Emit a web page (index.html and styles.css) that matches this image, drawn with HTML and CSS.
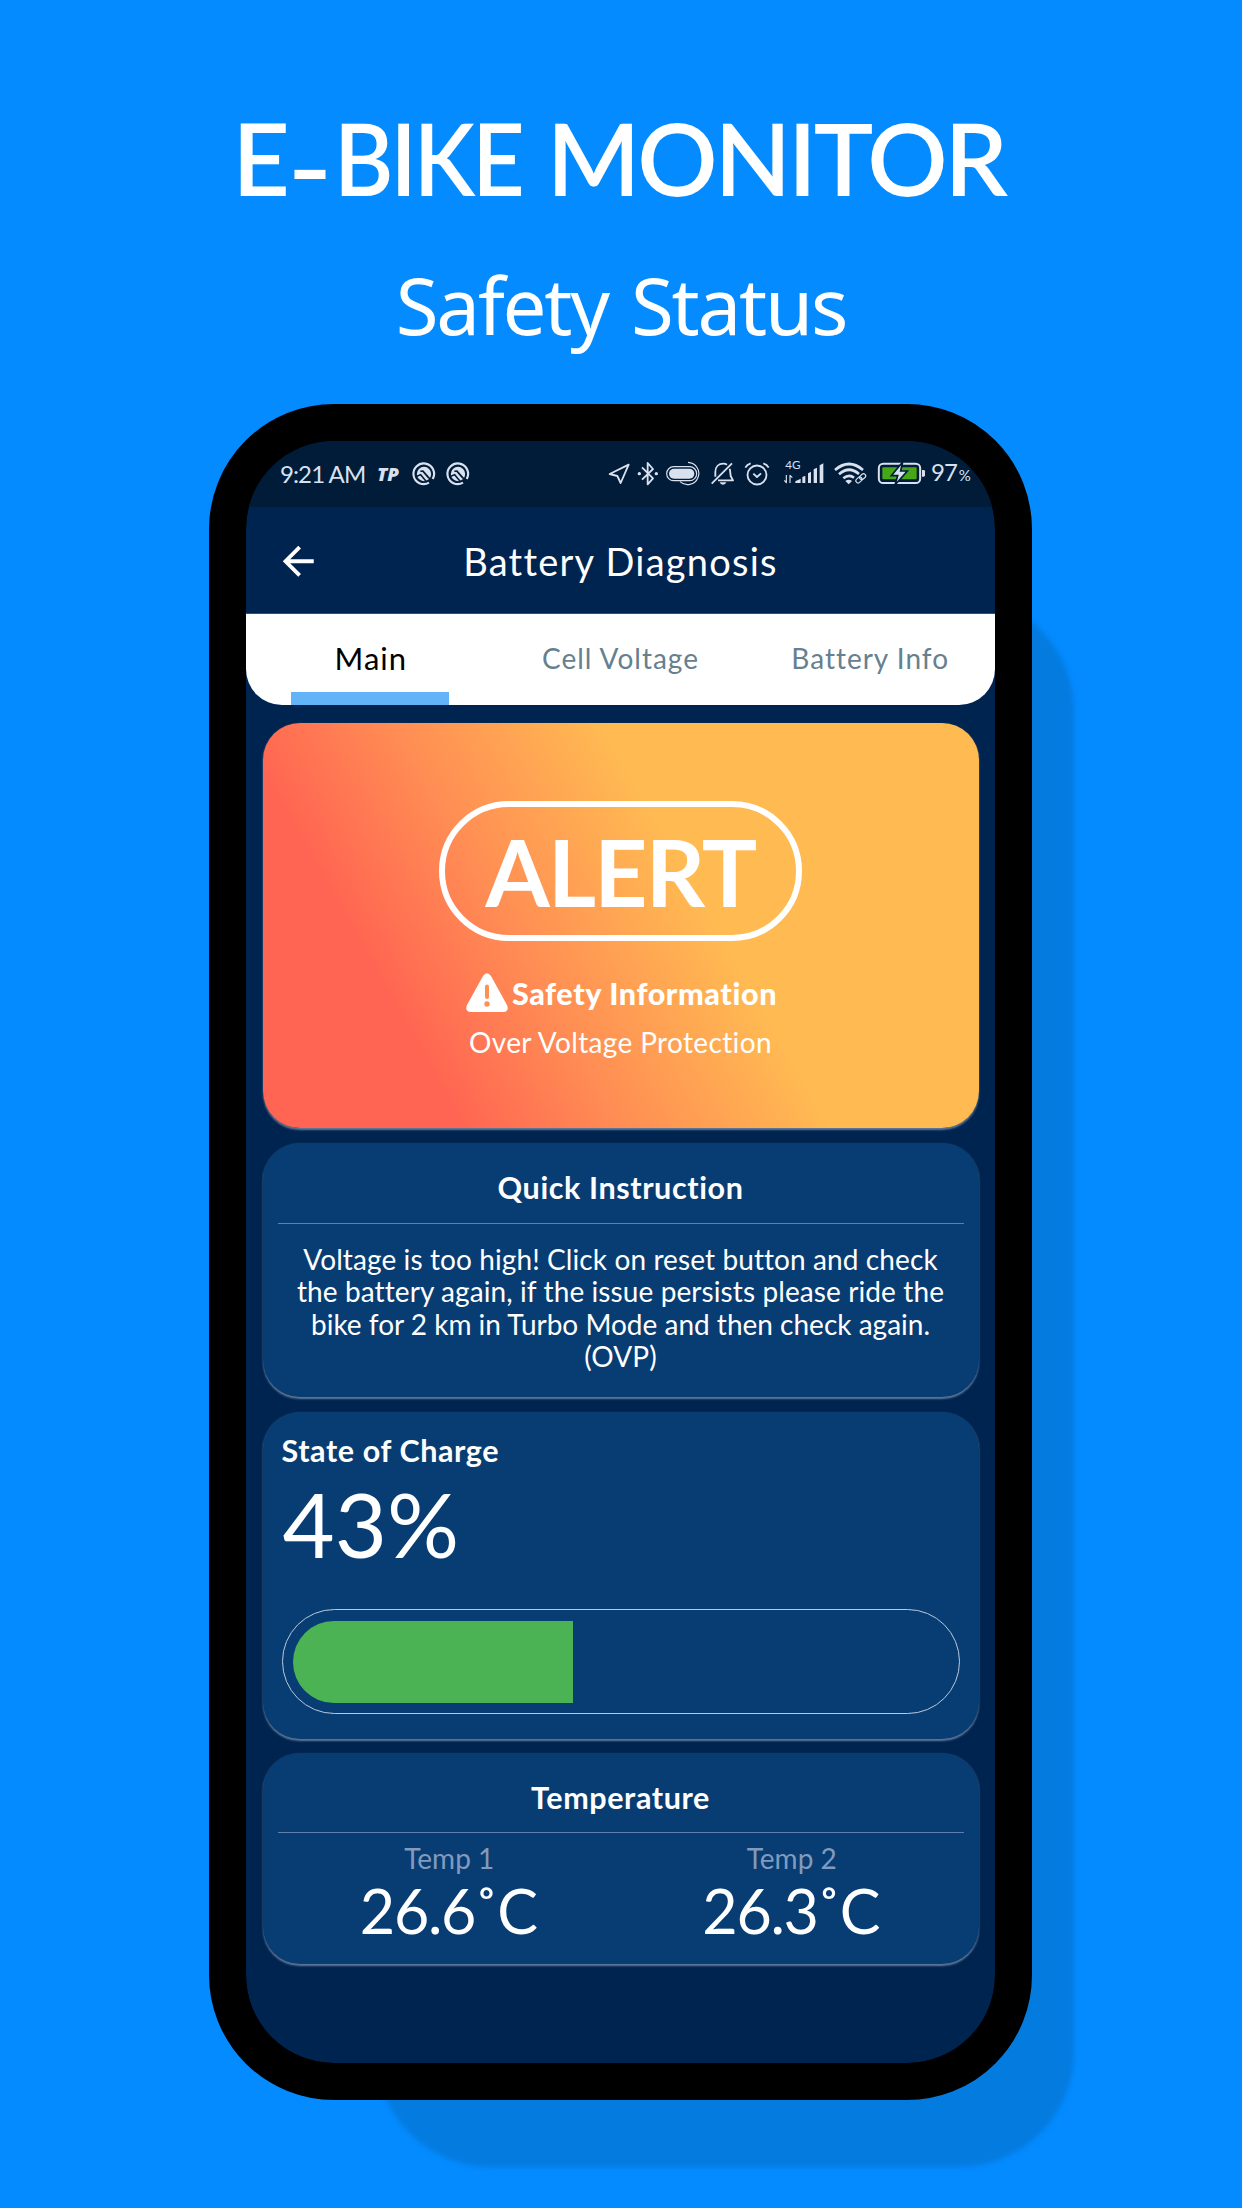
FILE: index.html
```
<!DOCTYPE html>
<html lang="en">
<head>
<meta charset="utf-8">
<title>E-Bike Monitor</title>
<link rel="stylesheet" href="styles.css">
</head>
<body>
<main class="page">
  <h1 class="title">E<span class="dash">-</span><span class="bike">BIKE</span> MONITOR</h1>
  <p class="subtitle">Safety Status</p>

  <div class="phone">
    <div class="screen">
      <div class="status">
        <span class="time">9:21 AM</span>
        <svg class="tp" width="30" height="27" viewBox="0 0 30 27"><text x="3" y="20.500" textLength="22" lengthAdjust="spacingAndGlyphs">TP</text></svg>
        <svg class="app" width="24" height="24" viewBox="0 0 72 72"><g id="speed"><path d="M62 51A31 31 0 1 0 51 62" fill="none" stroke="currentColor" stroke-width="6.500"/><circle cx="36" cy="36" r="21.500" fill="currentColor"/><path d="M10 45L26 38L44 60M25 28L33 27L64 62M32 27L50 48" fill="none" stroke="#001c39" stroke-width="4.500"/></g></svg>
        <svg class="app" width="24" height="24" viewBox="0 0 72 72"><use href="#speed"/></svg>

        <div class="indicators">
          <svg width="26" height="27" viewBox="52 46 78 81"><path d="M114 60L57 88L80 94L90 115Z" class="line"/></svg>
          <svg width="28" height="27" viewBox="130 46 84 81"><path d="M154 105L187 73L171 55V119L187 101L154 68" class="line"/><circle cx="146" cy="87" r="5"/><circle cx="197" cy="87" r="5"/></svg>
          <svg width="44" height="27" viewBox="214 46 132 81"><rect x="228" y="66" width="90" height="42" rx="21" class="line thin"/><rect x="235" y="72" width="76" height="30" rx="15"/><path d="M292 53A33.5 33.5 0 1 1 268 111" class="line thin"/></svg>
          <svg width="33" height="27" viewBox="346 46 99 81"><path d="M363 117L424 56M374 96V82C374 66 384 57 398 57C403 57 406 58 409 60M417 72C419 78 419 87 420 94L427 107H382" class="line"/><path d="M387 113H407Q405 120 397 120T387 113Z"/></svg>
          <svg width="37" height="27" viewBox="445 46 111 81"><circle cx="499" cy="91" r="28.5" class="line"/><path d="M488 87L499 97L511 86M464 69Q469 59 480 56M518 56Q529 59 534 69" class="line"/></svg>
          <svg width="53" height="27" viewBox="556 46 159 81"><text x="584" y="74" class="net">4G</text><path d="M587 91V114L581 107M598 115V92L605 99" class="line thin"/><path d="M614 115V110L630 102V115ZM635 115V97L644 93V115ZM652 115V86L661 81V115ZM669 115V74L679 69V115ZM687 115V62L698 56V115Z"/></svg>
          <svg width="43" height="27" viewBox="715 46 129 81"><path d="M733 76Q775 40 817 76M745 89Q775 62 805 88M758 101Q775 87 790 99" class="line wave"/><path d="M764 109Q774 101 784 109L774 119Z"/><g transform="rotate(-42 811 101)" class="line thin"><rect x="793" y="94" width="20" height="13" rx="6.5"/><rect x="808" y="94" width="20" height="13" rx="6.5"/></g></svg>
          <svg width="56" height="27" viewBox="844 46 168 81"><rect x="864.500" y="57" width="124" height="58" rx="13" class="line cell"/><rect x="875" y="68" width="103" height="36" rx="3" class="level"/><path d="M994 76H999Q1003 76 1003 80V92Q1003 96 999 96H994Z"/><path d="M936 52L902 93H921L913 121L950 79H930Z" class="bolt"/></svg>
          <span class="percent">97<small>%</small></span>
        </div>
      </div>

      <header class="appbar">
        <svg class="back" width="46.500" height="46.500" viewBox="0 0 24 24"><path d="M20 11H7.830L13.420 5.410L12 4L4 12L12 20L13.410 18.590L7.830 13H20Z"/></svg>
        <h2>Battery Diagnosis</h2>
      </header>

      <nav class="tabs">
        <a class="tab active">Main</a>
        <a class="tab">Cell Voltage</a>
        <a class="tab">Battery Info</a>
      </nav>

      <section class="card alert">
        <div class="pill">ALERT</div>
        <div class="safety">
          <svg width="42" height="40" viewBox="0 0 42 40"><path d="M17 3Q21-2.500 25 3L41 32Q43.500 38.500 37 39H5Q-1.500 38.500 1 32Z" fill="#fff"/><path d="M21 13.500V24" stroke="#ff9053" stroke-width="4" stroke-linecap="round"/><circle cx="21" cy="31" r="2.700" fill="#ff9053"/></svg>
          <strong>Safety Information</strong>
        </div>
        <p>Over Voltage Protection</p>
      </section>

      <section class="card quick">
        <h3 class="head">Quick Instruction</h3>
        <p>Voltage is too high! Click on reset button and check<br>the battery again, if the issue persists please ride the<br><span class="snug">bike for 2 km in Turbo Mode and then check again.</span><br>(OVP)</p>
      </section>

      <section class="card charge">
        <h3>State of Charge</h3>
        <div class="level-value">43%</div>
        <div class="bar"><div class="fill" style="width:42.7%"></div></div>
      </section>

      <section class="card temps">
        <h3 class="head">Temperature</h3>
        <div class="readings">
          <div><span>Temp 1</span><b>26.6<i>˚</i>C</b></div>
          <div><span>Temp 2</span><b>26.3<i>˚</i>C</b></div>
        </div>
      </section>
    </div>
  </div>
</main>
</body>
</html>
```
FILE: styles.css
```
* { box-sizing: border-box; margin: 0; padding: 0; }

body {
  width: 1242px;
  height: 2208px;
  background: #048bff;
  color: #fff;
  font-family: Lato, "Liberation Sans", sans-serif;
}

.page {
  display: flex;
  flex-direction: column;
  height: 2208px;
  padding-top: 97px;
  overflow: hidden;
}

.title {
  padding-right: 5px;
  text-align: center;
  font-size: 100px;
  font-weight: 600;
  line-height: 120px;
  letter-spacing: -3.2px;
}

.dash, .bike { display: inline-block; }
.dash { margin: 0 9px 0 4px; transform: translateY(9px) scaleX(1.22); }
.bike { margin-right: -15px; transform: scaleX(.91); transform-origin: left; }

.subtitle {
  margin-top: 38px;
  text-align: center;
  font: 400 78px/100px "Noto Sans", sans-serif;
  letter-spacing: -2.2px;
  word-spacing: 5px;
}

/* Device frame and its offset shadow */
.phone {
  position: relative;
  z-index: 0;
  width: 823px;
  height: 1696px;
  margin: 49px 0 0 209px;
}

.phone::before {
  content: "";
  position: absolute;
  z-index: -1;
  top: 192px;
  left: 167px;
  width: 698px;
  height: 1571px;
  border-radius: 115px;
  background: #047bdf;
  filter: blur(2.5px);
}

.screen {
  display: flex;
  flex-direction: column;
  height: 100%;
  border: 37px solid #000;
  border-radius: 125px;
  background: linear-gradient(#002450, #002450) padding-box, #000;
  overflow: hidden;
}

/* Status bar */
.status {
  display: flex;
  align-items: center;
  height: 66px;
  padding: 0 25px 1px 34px;
  background: #001c39;
  color: #d9e1ef;
  font-size: 24px;
  line-height: 64px;
}

.status svg { overflow: visible; }

.time { width: 94px; letter-spacing: -.9px; white-space: nowrap; }

.tp { margin-right: 7.500px; }
.tp text {
  font: italic 900 18px "Noto Sans", sans-serif;
  fill: currentColor;
}

.app { margin-right: 10.500px; }

.indicators {
  display: flex;
  align-items: center;
  margin-left: auto;
  fill: currentColor;
}

.indicators svg { flex: none; }
.line { fill: none; stroke: currentColor; stroke-width: 5.500px; stroke-linejoin: round; }
.thin { stroke-width: 3.500px; }
.wave { stroke-width: 8px; }
.cell { stroke-width: 6px; }
.level { fill: #46a817; }
.bolt { stroke: #001c39; stroke-width: 5px; }
.net { font: 35px/1 Lato, sans-serif; }

.percent { width: 42px; padding-left: 3px; letter-spacing: -1px; white-space: nowrap; }
.percent small { margin-left: 2px; font-size: 15px; }

/* App bar */
.appbar {
  display: grid;
  grid-template-columns: 46.500px 1fr 46.500px;
  align-items: center;
  height: 107px;
  padding: 2px 29px 0;
  border-bottom: 1px solid #33507a;
}

.back { fill: #fff; }

.appbar h2 {
  text-align: center;
  font-size: 38px;
  font-weight: 400;
  letter-spacing: 1.250px;
}

.tabs {
  display: grid;
  grid-template-columns: repeat(3, 1fr);
  height: 91px;
  border-radius: 0 0 36px 36px;
  background: #fff;
  overflow: hidden;
}

.tab {
  display: flex;
  flex-direction: column;
  align-items: center;
  color: #66808f;
  font-size: 28px;
  line-height: 88px;
  letter-spacing: 1px;
}

.tab.active { color: #000; font-size: 31px; }

.tab.active::after {
  content: "";
  width: 158.500px;
  height: 13px;
  margin: -10px 2px 0 0;
  background: #63b3f8;
}

/* Cards */
.card {
  width: 716px;
  margin: 14px auto 0;
  border-radius: 37px;
  background: #083d73;
  box-shadow: 0 1.500px 2px rgba(190, 205, 225, .5);
}

.card h3, .safety {
  font-size: 30.500px;
  font-weight: 700;
  letter-spacing: .6px;
}

.alert {
  display: flex;
  flex-direction: column;
  align-items: center;
  height: 405px;
  margin-top: 18px;
  padding-top: 78px;
  background: linear-gradient(60.500deg, #ff6552 21%, #ff8d54 38%, #ffba52 60%);
}

.pill {
  width: 363px;
  height: 140px;
  padding-top: 1px;
  border: 6px solid #fff;
  border-radius: 70px;
  text-align: center;
  font-size: 92.500px;
  font-weight: 700;
  line-height: 128px;
  letter-spacing: -1.700px;
}

.safety {
  display: flex;
  align-items: center;
  gap: 4px;
  height: 44px;
  margin: 30px 0 0 2px;
}

.alert p {
  margin-top: 7px;
  font-size: 28px;
  line-height: 40px;
  letter-spacing: .350px;
}

.head {
  height: 80.500px;
  margin: 0 15px;
  border-bottom: 1.500px solid #5f80ab;
  text-align: center;
  line-height: 88px;
}

.quick { height: 254px; margin-top: 15px; }

.quick p {
  margin-top: 19.500px;
  text-align: center;
  font-size: 28px;
  line-height: 32.400px;
  letter-spacing: .1px;
}

.snug { letter-spacing: 0; }

.charge { height: 326.500px; margin-top: 15px; padding: 20px 19px 0; }
.charge h3 { line-height: 36px; }

.level-value { padding: 1px 0 0 1px; font-size: 90px; line-height: 108px; }

.bar {
  height: 105px;
  margin-top: 32px;
  padding: 10.500px;
  border: 1.500px solid #b9c9dc;
  border-radius: 53px;
}

.fill {
  height: 100%;
  border-radius: 41px 0 0 41px;
  background: #4bb354;
}

.temps { height: 211px; }

.readings {
  display: grid;
  grid-template-columns: 1fr 1fr;
  margin: 8px 15.500px 0;
  text-align: center;
}

.readings span, .readings b { display: block; font-weight: 400; }
.readings span { color: #829abd; font-size: 28px; line-height: 34px; }
.readings b { padding: 2px 2px 0 0; font-size: 61px; line-height: 68px; letter-spacing: -1.300px; }
.readings i { margin-left: -1px; font-style: normal; }
```
